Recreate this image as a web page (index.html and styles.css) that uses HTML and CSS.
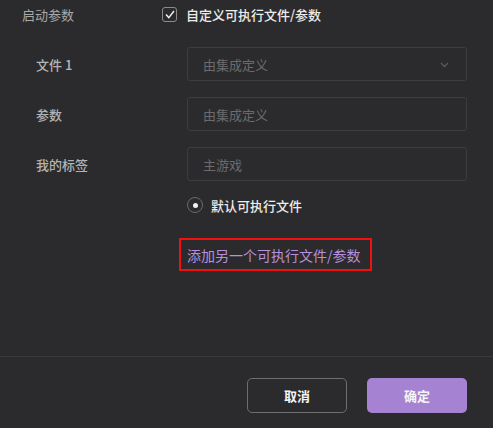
FILE: index.html
```html
<!DOCTYPE html>
<html lang="zh">
<head>
<meta charset="utf-8">
<link rel="stylesheet" href="styles.css">
</head>
<body>
<div class="page">
  <main class="form">
    <div class="row-top">
      <span class="label-top">启动参数</span>
      <label class="check">
        <span class="checkbox">
          <svg width="10" height="9" viewBox="0 0 10 9"><path d="M1 4.6 L3.8 7.6 L9 1" fill="none" stroke="#f2f2f2" stroke-width="1.4"/></svg>
        </span>
        <span class="check-text">自定义可执行文件/参数</span>
      </label>
    </div>
    <div class="row">
      <span class="label">文件 1</span>
      <div class="field select">
        <span class="placeholder">由集成定义</span>
        <svg class="chev" width="9" height="6" viewBox="0 0 9 6"><path d="M1 1 L4.5 4.5 L8 1" fill="none" stroke="#5a5a5c" stroke-width="1.3"/></svg>
      </div>
    </div>
    <div class="row">
      <span class="label">参数</span>
      <div class="field"><span class="placeholder">由集成定义</span></div>
    </div>
    <div class="row">
      <span class="label">我的标签</span>
      <div class="field"><span class="placeholder">主游戏</span></div>
    </div>
    <div class="row-radio">
      <span class="radio"><span class="dot"></span></span>
      <span class="radio-text">默认可执行文件</span>
    </div>
    <div class="row-link">
      <a class="add-link">添加另一个可执行文件/参数</a>
    </div>
  </main>
  <footer class="footer">
    <button class="btn btn-cancel">取消</button>
    <button class="btn btn-ok">确定</button>
  </footer>
</div>
</body>
</html>
```
FILE: styles.css
```css
* { box-sizing: border-box; }
html, body {
  margin: 0;
  padding: 0;
  background: #2b2b2d;
}
body {
  font-family: "Noto Sans CJK SC", "Noto Sans", sans-serif;
  font-size: 13px;
  color: #b4b4b4;
}
.page {
  width: 493px;
  height: 428px;
  display: flex;
  flex-direction: column;
}
.form {
  flex: 1;
  display: flex;
  flex-direction: column;
}
.row-top {
  height: 28px;
  display: flex;
  align-items: center;
  padding-left: 22px;
}
.label-top {
  width: 140px;
  color: #a8a8a8;
}
.check {
  display: flex;
  align-items: center;
}
.checkbox {
  width: 15px;
  height: 15px;
  border: 1px solid #8c8c8c;
  border-radius: 3px;
  display: flex;
  align-items: center;
  justify-content: center;
  margin-right: 9px;
}
.check-text {
  color: #ececec;
  font-weight: 500;
}
.row {
  display: flex;
  align-items: center;
  padding-left: 36px;
  margin-top: 16px;
  height: 34px;
}
.row-top + .row { margin-top: 19px; }
.label {
  width: 151px;
  color: #b4b4b4;
  font-weight: 500;
}
.field {
  width: 280px;
  height: 34px;
  border: 1px solid #3d3d40;
  border-radius: 3px;
  display: flex;
  align-items: center;
  justify-content: space-between;
  padding: 0 17px 0 15px;
}
.placeholder {
  color: #6b6b6d;
}
.chev { margin-top: 1px; }
.row-radio {
  display: flex;
  align-items: center;
  margin-top: 16px;
  padding-left: 187px;
  height: 16px;
}
.radio {
  width: 16px;
  height: 16px;
  border: 1px solid #6a6a6c;
  border-radius: 50%;
  display: flex;
  align-items: center;
  justify-content: center;
  margin-right: 8px;
}
.dot {
  width: 5px;
  height: 5px;
  border-radius: 50%;
  background: #f0f0f0;
}
.radio-text {
  color: #ececec;
  font-weight: 500;
}
.row-link {
  margin-top: 25px;
  padding-left: 179px;
}
.add-link {
  display: inline-flex;
  align-items: center;
  width: 193px;
  height: 33px;
  border: 2px solid #f01010;
  padding-left: 6px;
  font-size: 14px;
  color: #b68fdf;
  white-space: nowrap;
}
.footer {
  height: 72px;
  border-top: 1px solid #3a3a3c;
  display: flex;
  justify-content: flex-end;
  gap: 20px;
  padding: 21px 26px 0 0;
}
.btn {
  width: 100px;
  height: 35px;
  border-radius: 5px;
  font-family: "Noto Sans CJK SC", sans-serif;
  font-size: 13px;
  font-weight: 700;
  color: #f4f4f4;
  padding: 0;
}
.btn-cancel {
  background: transparent;
  border: 1px solid #6e6e70;
}
.btn-ok {
  background: #a682d2;
  border: none;
}
```
